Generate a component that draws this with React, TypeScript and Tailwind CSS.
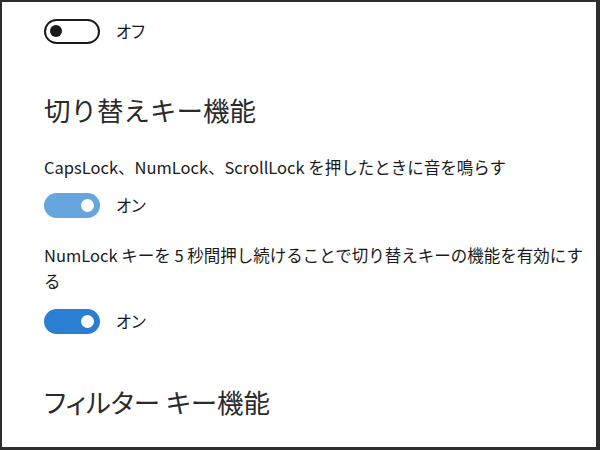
import React from 'react';

const font = { fontFamily: '"Noto Sans CJK JP", "Noto Sans", sans-serif' };

function Toggle({ on, tone }: { on: boolean; tone?: 'light' | 'dark' }) {
  if (!on) {
    return (
      <div className="flex items-center w-[56px] h-[25px] rounded-full border-[2.5px] border-[#1a1a1a] px-[4px]">
        <div className="w-[12px] h-[12px] rounded-full bg-[#1a1a1a]" />
      </div>
    );
  }
  const bg = tone === 'light' ? 'bg-[#66a5de]' : 'bg-[#2b7fd3]';
  return (
    <div className={`flex items-center justify-end w-[56px] h-[25px] rounded-full ${bg} px-[6px]`}>
      <div className="w-[13px] h-[13px] rounded-full bg-white" />
    </div>
  );
}

function Row({ on, tone, label }: { on: boolean; tone?: 'light' | 'dark'; label: string }) {
  return (
    <div className="flex items-center h-[26px] gap-[16px]">
      <Toggle on={on} tone={tone} />
      <span className="text-[16.5px] text-[#1a1a1a] [font-feature-settings:'palt']">{label}</span>
    </div>
  );
}

export default function App() {
  return (
    <div
      className="w-[600px] h-[450px] bg-white border-l-[2px] border-t-[2px] border-r-[4px] border-b-[3px] border-[#2e2e2e] overflow-hidden"
      style={font}
    >
      <div className="pl-[42px] pt-[16px] flex flex-col">
        <Row on={false} label="オフ" />

        <h2 className="mt-[49px] text-[26.5px] leading-[34px] text-[#2a2a2a] font-normal">切り替えキー機能</h2>

        <p className="mt-[27px] text-[16.5px] leading-[26px] text-[#1a1a1a]">
          CapsLock、NumLock、ScrollLock を押したときに音を鳴らす
        </p>
        <div className="mt-[12px]">
          <Row on tone="light" label="オン" />
        </div>

        <p className="mt-[24px] w-[545px] text-[16.5px] leading-[26px] text-[#1a1a1a]">
          NumLock キーを 5 秒間押し続けることで切り替えキーの機能を有効にする
        </p>
        <div className="mt-[14px]">
          <Row on tone="dark" label="オン" />
        </div>

        <h2 className="mt-[51px] text-[26.5px] leading-[34px] text-[#2a2a2a] font-normal [font-feature-settings:'palt']">
          フィルター キー機能
        </h2>
      </div>
    </div>
  );
}
